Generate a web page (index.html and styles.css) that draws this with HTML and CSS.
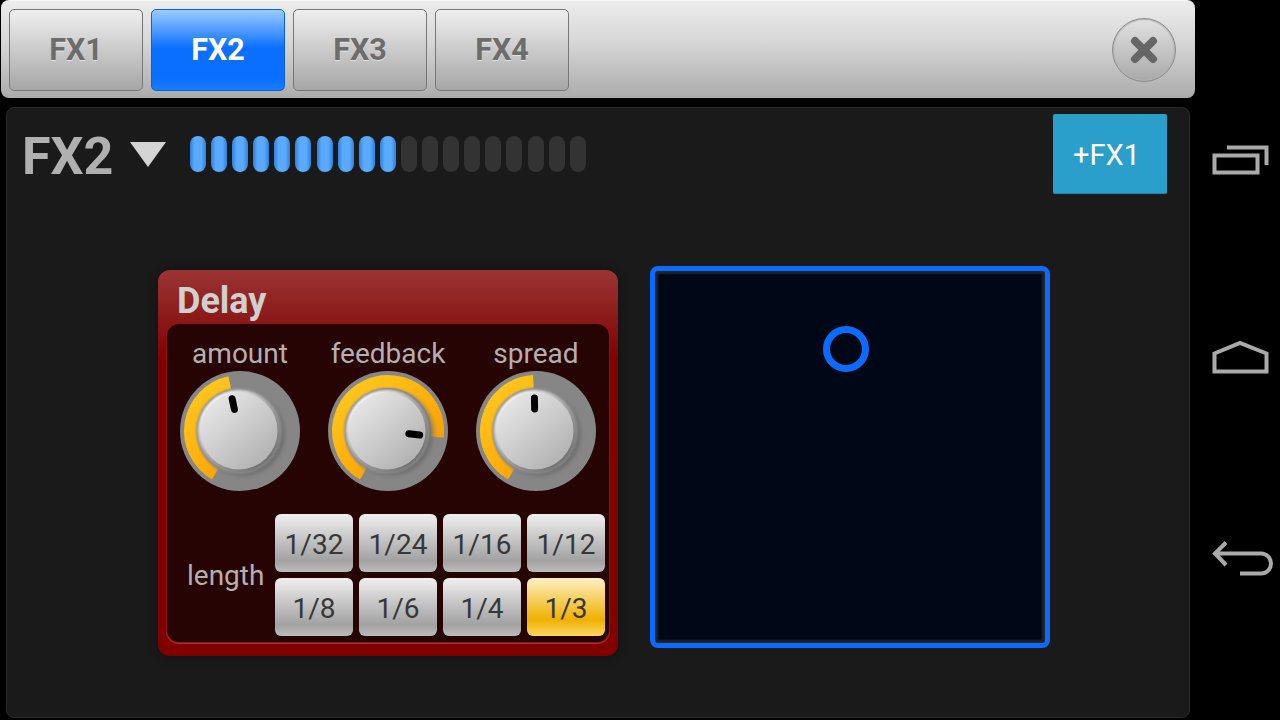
FILE: index.html
```html
<!DOCTYPE html>
<html lang="en">
<head>
    <meta charset="UTF-8">
    <title>FX</title>
    <link rel="stylesheet" href="styles.css">
</head>
<body>
    <div class="screen">
        <div class="app">
            <!-- tabs on top -->
            <div class="topbar">
                <button class="tab">FX1</button>
                <button class="tab active">FX2</button>
                <button class="tab">FX3</button>
                <button class="tab">FX4</button>
                <button class="close" aria-label="close">
                    <svg width="30" height="30" viewBox="0 0 30 30">
                        <path d="M6 6L24 24M24 6L6 24" class="close-x"/>
                    </svg>
                </button>
            </div>

            <div class="panel">
                <div class="panel-head">
                    <div class="fx-name">FX2</div>
                    <div class="arrow-down"></div>
                    <div class="meter">
                        <span class="seg on"></span><span class="seg on"></span><span class="seg on"></span><span class="seg on"></span><span class="seg on"></span>
                        <span class="seg on"></span><span class="seg on"></span><span class="seg on"></span><span class="seg on"></span><span class="seg on"></span>
                        <span class="seg"></span><span class="seg"></span><span class="seg"></span><span class="seg"></span><span class="seg"></span>
                        <span class="seg"></span><span class="seg"></span><span class="seg"></span><span class="seg"></span>
                    </div>
                    <button class="add-fx">+FX1</button>
                </div>

                <div class="panel-body">
                    <div class="card">
                        <div class="card-title">Delay</div>
                        <div class="card-inner">
                            <div class="knobs">
                                <div class="knob-box">
                                    <div class="knob-label">amount</div>
                                    <svg class="knob" width="120" height="120" viewBox="0 0 120 120">
                                        <defs>
                                            <linearGradient id="arcGrad" gradientUnits="userSpaceOnUse" x1="20" y1="10" x2="100" y2="110">
                                                <stop offset="0" stop-color="#ffc81e"/>
                                                <stop offset="0.55" stop-color="#ffad0a"/>
                                                <stop offset="1" stop-color="#ee9500"/>
                                            </linearGradient>
                                            <linearGradient id="rimGrad" x1="0.15" y1="0.1" x2="0.85" y2="0.9">
                                                <stop offset="0" stop-color="#ffffff"/>
                                                <stop offset="0.45" stop-color="#b0b0b0"/>
                                                <stop offset="1" stop-color="#6a6a6a"/>
                                            </linearGradient>
                                            <linearGradient id="capGrad" x1="0.15" y1="0.1" x2="0.85" y2="0.9">
                                                <stop offset="0" stop-color="#e6e6e6"/>
                                                <stop offset="1" stop-color="#b2b2b2"/>
                                            </linearGradient>
                                            <radialGradient id="shadeGrad">
                                                <stop offset="0.78" stop-color="#5a5a5a"/>
                                                <stop offset="1" stop-color="#868686" stop-opacity="0"/>
                                            </radialGradient>
                                            <filter id="soft" x="-10%" y="-10%" width="120%" height="120%">
                                                <feGaussianBlur stdDeviation="0.8"/>
                                            </filter>
                                            <g id="knobCap">
                                                <circle cx="63" cy="63" r="47" fill="url(#shadeGrad)"/>
                                                <circle cx="59" cy="60" r="43" fill="#8c8c8c" filter="url(#soft)"/>
                                                <circle cx="59" cy="60" r="41" fill="url(#rimGrad)" filter="url(#soft)"/>
                                                <circle cx="59" cy="60" r="38.5" fill="url(#capGrad)"/>
                                            </g>
                                        </defs>
                                        <circle cx="60" cy="60" r="60" fill="#868686"/>
                                        <path d="M35.25 102.87A49.5 49.5 0 0 1 49.71 11.58" class="knob-arc"/>
                                        <use href="#knobCap"/>
                                        <line x1="59" y1="38" x2="59" y2="27" class="knob-needle" transform="rotate(-12 59 60)"/>
                                    </svg>
                                </div>
                                <div class="knob-box">
                                    <div class="knob-label">feedback</div>
                                    <svg class="knob" width="120" height="120" viewBox="0 0 120 120">
                                        <circle cx="60" cy="60" r="60" fill="#868686"/>
                                        <path d="M35.25 102.87A49.5 49.5 0 1 1 109.13 66.03" class="knob-arc"/>
                                        <use href="#knobCap"/>
                                        <line x1="59" y1="38" x2="59" y2="27" class="knob-needle" transform="rotate(97 59 60)"/>
                                    </svg>
                                </div>
                                <div class="knob-box">
                                    <div class="knob-label">spread</div>
                                    <svg class="knob" width="120" height="120" viewBox="0 0 120 120">
                                        <circle cx="60" cy="60" r="60" fill="#868686"/>
                                        <path d="M35.25 102.87A49.5 49.5 0 0 1 57.41 10.57" class="knob-arc"/>
                                        <use href="#knobCap"/>
                                        <line x1="59" y1="38" x2="59" y2="27" class="knob-needle" transform="rotate(-1 59 60)"/>
                                    </svg>
                                </div>
                            </div>

                            <div class="length-row">
                                <div class="length-label">length</div>
                                <div class="length-grid">
                                    <button class="len">1/32</button>
                                    <button class="len">1/24</button>
                                    <button class="len">1/16</button>
                                    <button class="len">1/12</button>
                                    <button class="len">1/8</button>
                                    <button class="len">1/6</button>
                                    <button class="len">1/4</button>
                                    <button class="len selected">1/3</button>
                                </div>
                            </div>
                        </div>
                    </div>

                    <!-- xy pad -->
                    <div class="pad">
                        <div class="pad-dot"></div>
                    </div>
                </div>
            </div>
        </div>

        <!-- android buttons -->
        <div class="navbar">
            <svg class="nav-icon" width="64" height="40" viewBox="0 0 64 40">
                <rect x="3.5" y="16.5" width="43" height="17"/>
                <path d="M16 8.5H55.5V26"/>
            </svg>
            <svg class="nav-icon" width="64" height="40" viewBox="0 0 64 40">
                <path d="M3.5 15.5L29 5L55.5 15.5V33.5H3.5Z"/>
            </svg>
            <svg class="nav-icon" width="64" height="40" viewBox="0 0 64 40">
                <path d="M15 5.5L4 16.5L15 28M4 16.5H50a10 10 0 0 1 0 20H29"/>
            </svg>
        </div>
    </div>
</body>
</html>
```

FILE: styles.css
```css
* {
    box-sizing: border-box;
}

body {
    margin: 0;
    background-color: #000;
    font-family: Roboto, "Liberation Sans", sans-serif;
}

button {
    font-family: inherit;
    padding: 0;
    cursor: pointer;
}

.screen {
    display: flex;
    width: 1280px;
    height: 720px;
    overflow: hidden;
}

.app {
    display: flex;
    flex-direction: column;
    width: 1195px;
}

/* top bar */
.topbar {
    display: flex;
    align-items: center;
    gap: 8px;
    height: 98px;
    margin-left: 1px;
    padding-left: 8px;
    padding-right: 19px;
    background: linear-gradient(#ececec, #d8d8d8 40%, #ababab);
    border-top: 1px solid #f6f6f6;
    border-radius: 8px;
}

.tab {
    width: 134px;
    height: 82px;
    font-size: 30.5px;
    font-weight: bold;
    color: #6c6c6c;
    text-shadow: 0 1px 0 #e4e4e4;
    background: linear-gradient(#efefef, #a6a6a6);
    border: 1px solid #777;
    border-radius: 5px;
}

.tab.active {
    color: #fff;
    text-shadow: none;
    background: linear-gradient(#9accff, #0a6eff 48%, #0a6eff 85%, #1a7cff);
    border-color: #0a62d0;
}

.close {
    display: flex;
    align-items: center;
    justify-content: center;
    width: 64px;
    height: 64px;
    margin-left: auto;
    background: linear-gradient(#e2e2e2, #a9a9a9);
    border: 1px solid #8a8a8a;
    border-radius: 50%;
    box-shadow: inset 0 0 1px 1px #b4b4b4;
}

.close-x {
    fill: none;
    stroke: #666;
    stroke-width: 8;
    stroke-linecap: round;
}

/* main panel */
.panel {
    flex: 1;
    margin: 9px 5px 2px 6px;
    padding: 6px 22px 0 15px;
    background-color: #1a1a1a;
    border: 1px solid #2a2a2a;
    border-radius: 8px;
}

.panel-head {
    display: flex;
    align-items: center;
    height: 80px;
}

.fx-name {
    width: 108px;
    font-size: 52px;
    font-weight: bold;
    color: #b0b0b0;
    margin-top: 4px;
}

.arrow-down {
    width: 0;
    height: 0;
    border-left: 18px solid transparent;
    border-right: 18px solid transparent;
    border-top: 25px solid #d4d4d4;
}

.meter {
    display: flex;
    gap: 5.1px;
    margin-left: 24px;
}

.seg {
    width: 16px;
    height: 36px;
    background-color: #333;
    border-radius: 8px;
}

.seg.on {
    background: linear-gradient(90deg, #2f7fdc, #5aabff 30%, #5aabff 70%, #2f7fdc);
}

.add-fx {
    width: 114px;
    height: 80px;
    margin-left: auto;
    padding: 3px 7px 0 0;
    font-size: 29px;
    color: #fff;
    background-color: #2b9fcb;
    border: none;
    border-bottom: 1px solid #2484a8;
    border-radius: 2px;
}

.panel-body {
    display: flex;
    align-items: flex-start;
    gap: 32px;
    margin-top: 72px;
    padding-left: 136px;
}

/* delay card */
.card {
    width: 460px;
    height: 386px;
    margin-top: 4px;
    padding: 0 9px;
    background: linear-gradient(#9b3434, #8a1616 54px, #800000 90px);
    border-radius: 12px;
    box-shadow: 0 0 8px #111;
}

.card-title {
    height: 54px;
    padding-left: 10px;
    font-size: 36px;
    line-height: 63px;
    font-weight: bold;
    color: #d0d0d0;
}

.card-inner {
    height: 318px;
    background-color: #260404;
    border-radius: 12px;
    box-shadow: 0 0 0 1px #8e1414, 0 1px 0 1px #a03a3a;
}

.knobs {
    display: grid;
    grid-template-columns: repeat(3, 148px);
    margin-left: -1px;
    padding-top: 14px;
}

.knob-box {
    display: flex;
    flex-direction: column;
    align-items: center;
}

.knob-label {
    height: 33px;
    font-size: 28px;
    line-height: 32px;
    color: #b5afaf;
}

.knob {
    display: block;
}

.knob-arc {
    fill: none;
    stroke: url(#arcGrad);
    stroke-width: 13;
}

.knob-needle {
    stroke: #000;
    stroke-width: 7;
    stroke-linecap: round;
}

.length-row {
    display: flex;
    align-items: center;
    margin-top: 23px;
}

.length-label {
    width: 108px;
    padding-left: 20px;
    font-size: 28px;
    color: #b5afaf;
}

.length-grid {
    display: grid;
    grid-template-columns: repeat(4, 78px);
    grid-auto-rows: 58px;
    gap: 6px;
}

.len {
    padding-top: 2px;
    font-size: 28px;
    color: #383838;
    background: linear-gradient(#efefef, #a2a2a2 80%, #bcbcbc);
    border: none;
    border-radius: 6px;
}

.len.selected {
    background: linear-gradient(#fdf0c4, #f0b000 72%, #fbd664);
}

/* xy pad */
.pad {
    position: relative;
    width: 400px;
    height: 382px;
    background-color: #000817;
    border: 5px solid #0a6cff;
    border-radius: 8px;
    box-shadow: inset 0 0 2px 3px #22242a;
}

.pad-dot {
    position: absolute;
    left: 168px;
    top: 55px;
    width: 46px;
    height: 46px;
    border: 7px solid #0a6cff;
    border-radius: 50%;
}

/* android nav */
.navbar {
    display: flex;
    flex-direction: column;
    gap: 159px;
    width: 85px;
    padding: 139px 0 0 16px;
}

.nav-icon {
    display: block;
    fill: none;
    stroke: #aaa;
    stroke-width: 4;
}
```
